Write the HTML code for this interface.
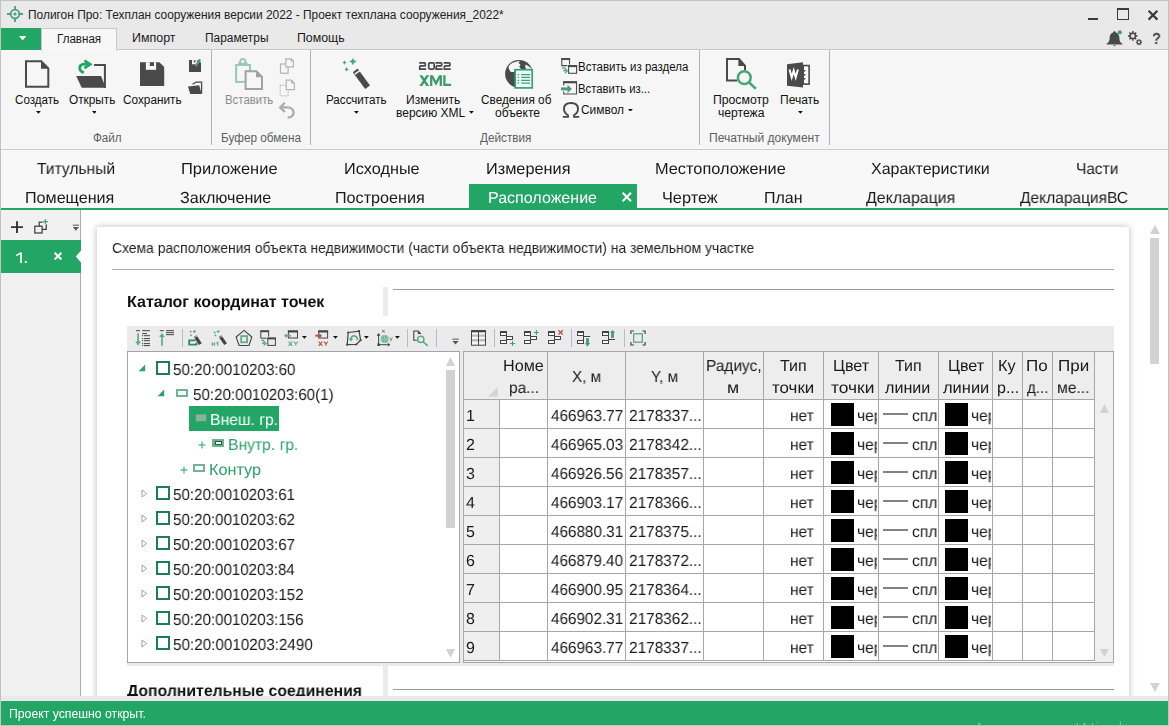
<!DOCTYPE html>
<html lang="ru">
<head>
<meta charset="utf-8">
<title>Полигон Про</title>
<style>
*{box-sizing:border-box;margin:0;padding:0}
html,body{width:1169px;height:726px;overflow:hidden;background:#e9e9e9}
body{font-family:"Liberation Sans",sans-serif;color:#1a1a1a;position:relative}
.abs{position:absolute}
.t{position:absolute;white-space:nowrap;line-height:1;transform-origin:0 0}
.g{will-change:transform;text-rendering:geometricPrecision}
.h{will-change:transform}
.c{position:absolute;white-space:nowrap;line-height:1;text-align:center}
#win{position:absolute;left:0;top:0;width:1169px;height:726px;border:1px solid #c2c2c2;border-bottom:none}
/* title */
#title{position:absolute;left:1px;top:1px;width:1167px;height:27px;background:#e9e9e9}
/* ribbon */
#rtabs{position:absolute;left:1px;top:28px;width:1167px;height:22px;background:#e9e9e9;border-bottom:1px solid #c9c9c9}
#rbody{position:absolute;left:1px;top:50px;width:1167px;height:100px;background:#f6f6f6;border-top:1px solid #fbfbfb;border-bottom:1px solid #cbcbcb}
.gsep{position:absolute;top:51px;width:1px;height:94px;background:#c6c6c6}
.glabel{position:absolute;top:131px;font-size:12px;color:#555;white-space:nowrap;line-height:14px;text-align:center}
.blabel{position:absolute;font-size:12.5px;color:#111;white-space:nowrap;line-height:14px;text-align:center}
/* section tabs */
#stabs{position:absolute;left:1px;top:150px;width:1167px;height:58px;background:#f8f8f8}
#gline{position:absolute;left:1px;top:208px;width:1167px;height:2px;background:#22a565}
.st{position:absolute;font-size:15.5px;line-height:18px;white-space:nowrap;color:#1a1a1a;text-align:center}
/* left panel */
#left{position:absolute;left:1px;top:210px;width:79px;height:486px;background:#f1f1f1}
#leftb{position:absolute;left:80px;top:210px;width:1px;height:486px;background:#ababab}
#main{position:absolute;left:81px;top:210px;width:1087px;height:486px;background:#fff;overflow:hidden}
#card{position:absolute;left:16px;top:17px;width:1032px;height:480px;background:#fff;box-shadow:0 0 7px rgba(0,0,0,.28)}
#status{position:absolute;left:1px;top:701px;width:1167px;height:24px;background:#22a565}
#bborder{position:absolute;left:0;top:725px;width:1169px;height:1px;background:#c2c2c2}
</style>
</head>
<body>
<div id="win"></div>
<div id="title"></div>
<div id="rtabs"></div>
<div id="rbody"></div>
<div id="stabs"></div>
<div id="gline"></div>
<div id="left"></div>
<div id="leftb"></div>
<div id="main"><div id="card"></div></div>
<svg class="abs" style="left:5px;top:5px;" width="20" height="18" viewBox="0 0 20 18"><g stroke="#4f9e78" fill="none" stroke-width="1.8"><circle cx="10" cy="9" r="4.3"/><path d="M10,1V4.7M10,13.3V17M2,9H5.7M14.3,9H18"/></g><circle cx="10" cy="9" r="1.6" fill="#4f9e78"/></svg>
<span class="t" style="left:28.24px;top:8px;font-size:12.5px;line-height:14px;color:#222;font-weight:400;transform:scaleX(0.9531);">Полигон Про: Техплан сооружения версии 2022 - Проект техплана сооружения_2022*</span>
<div class="abs" style="left:1088px;top:18px;width:10px;height:2px;background:#3a3a3a;"></div>
<div class="abs" style="left:1117px;top:8px;width:12px;height:12px;border:1px solid #3a3a3a;border-top:2px solid #3a3a3a"></div>
<svg class="abs" style="left:1147px;top:9px;" width="12" height="12" viewBox="0 0 12 12"><path d="M1.6,1.8L10.4,10.6M10.4,1.8L1.6,10.6" stroke="#3a3a3a" stroke-width="2.2" fill="none"/></svg>
<svg class="abs" style="left:1105px;top:29px;" width="20" height="18" viewBox="0 0 20 18"><path d="M9.5,2.2c-0.9,0-1.4,0.6-1.4,1.3C5.6,4.3,4.6,6.6,4.6,9.2c0,2.6-0.9,4.2-2.9,5.4v0.9h15.6v-0.9c-2-1.2-2.9-2.8-2.9-5.4c0-2.6-1-4.9-3.5-5.7C10.9,2.8,10.4,2.2,9.5,2.2z" fill="#4a4a4a"/><path d="M8,16.2h3l-1.5,1.2z" fill="#4a4a4a"/><circle cx="14.8" cy="3.3" r="2.1" fill="#3c9f6f"/></svg>
<svg class="abs" style="left:1126px;top:29px;" width="18" height="18" viewBox="0 0 18 18"><circle cx="6.8" cy="6.9" r="2.64" fill="none" stroke="#4a4a4a" stroke-width="1.6"/><path d="M9.68,6.90L11.60,6.90" stroke="#4a4a4a" stroke-width="1.52"/><path d="M8.84,8.94L10.19,10.29" stroke="#4a4a4a" stroke-width="1.52"/><path d="M6.80,9.78L6.80,11.70" stroke="#4a4a4a" stroke-width="1.52"/><path d="M4.76,8.94L3.41,10.29" stroke="#4a4a4a" stroke-width="1.52"/><path d="M3.92,6.90L2.00,6.90" stroke="#4a4a4a" stroke-width="1.52"/><path d="M4.76,4.86L3.41,3.51" stroke="#4a4a4a" stroke-width="1.52"/><path d="M6.80,4.02L6.80,2.10" stroke="#4a4a4a" stroke-width="1.52"/><path d="M8.84,4.86L10.19,3.51" stroke="#4a4a4a" stroke-width="1.52"/><circle cx="13" cy="13.2" r="1.705" fill="none" stroke="#4a4a4a" stroke-width="1.2"/><path d="M14.86,13.20L16.10,13.20" stroke="#4a4a4a" stroke-width="1.14"/><path d="M14.32,14.52L15.19,15.39" stroke="#4a4a4a" stroke-width="1.14"/><path d="M13.00,15.06L13.00,16.30" stroke="#4a4a4a" stroke-width="1.14"/><path d="M11.68,14.52L10.81,15.39" stroke="#4a4a4a" stroke-width="1.14"/><path d="M11.14,13.20L9.90,13.20" stroke="#4a4a4a" stroke-width="1.14"/><path d="M11.68,11.88L10.81,11.01" stroke="#4a4a4a" stroke-width="1.14"/><path d="M13.00,11.34L13.00,10.10" stroke="#4a4a4a" stroke-width="1.14"/><path d="M14.32,11.88L15.19,11.01" stroke="#4a4a4a" stroke-width="1.14"/></svg>
<span class="t g" style="left:1152.14px;top:31px;font-size:16px;line-height:17px;color:#444;font-weight:700;transform:scaleX(0.9209);">?</span>
<div class="abs" style="left:1px;top:28px;width:40px;height:22px;background:#22a565;"></div>
<svg class="abs" style="left:19px;top:36.4px;" width="7.4" height="4.6" viewBox="0 0 7.4 4.6"><path d="M0,0H7.4L3.7,4.6Z" fill="#fff"/></svg>
<div class="abs" style="left:41px;top:28px;width:76px;height:23px;background:#f7f7f7;border:1px solid #c9c9c9;border-bottom:none"></div>
<span class="t" style="left:56.75px;top:32px;font-size:12.5px;line-height:14px;color:#1a1a1a;font-weight:400;transform:scaleX(0.9278);">Главная</span>
<span class="t" style="left:131.68px;top:31px;font-size:12.5px;line-height:14px;color:#1a1a1a;font-weight:400;transform:scaleX(0.9962);">Импорт</span>
<span class="t" style="left:204.74px;top:31px;font-size:12.5px;line-height:14px;color:#1a1a1a;font-weight:400;transform:scaleX(0.9527);">Параметры</span>
<span class="t" style="left:297.30px;top:31px;font-size:12.5px;line-height:14px;color:#1a1a1a;font-weight:400;transform:scaleX(0.9861);">Помощь</span>
<div class="abs" style="left:211px;top:50px;width:1px;height:95px;background:#b2b2b9;"></div>
<div class="abs" style="left:310px;top:50px;width:1px;height:95px;background:#b2b2b9;"></div>
<div class="abs" style="left:699px;top:50px;width:1px;height:95px;background:#b2b2b9;"></div>
<div class="abs" style="left:829px;top:50px;width:1px;height:95px;background:#b2b2b9;"></div>
<svg class="abs" style="left:24px;top:59px;" width="27" height="30" viewBox="0 0 27 30"><path d="M2,2.3H17.2L24.3,9.4V27.8H2Z" fill="none" stroke="#4a4a4a" stroke-width="2"/><path d="M17,1.6V9.7H25Z" fill="#4a4a4a"/></svg>
<span class="t" style="left:15.32px;top:93px;font-size:12.5px;line-height:14px;color:#111;font-weight:400;transform:scaleX(0.9296);">Создать</span>
<svg class="abs" style="left:36.3px;top:111.3px;" width="4.8" height="2.8" viewBox="0 0 4.8 2.8"><path d="M0,0H4.8L2.4,2.8Z" fill="#111"/></svg>
<svg class="abs" style="left:74px;top:58px;" width="34" height="31" viewBox="0 0 34 31"><path d="M20.1,6.9H30.9V29.8" fill="none" stroke="#4a4a4a" stroke-width="2"/><path d="M2.2,18.1H27L31.8,29.8H7.7Z" fill="#4a4a4a"/><path d="M9.8,14.6C4.6,13 4,6.6 10.2,6.2H14.4" fill="none" stroke="#22a565" stroke-width="2.8"/><path d="M10.4,2.6L16.2,6.2L10.4,10.2" fill="none" stroke="#22a565" stroke-width="2.7"/></svg>
<span class="t" style="left:68.75px;top:93px;font-size:12.5px;line-height:14px;color:#111;font-weight:400;transform:scaleX(0.9440);">Открыть</span>
<svg class="abs" style="left:91.5px;top:111.3px;" width="4.8" height="2.8" viewBox="0 0 4.8 2.8"><path d="M0,0H4.8L2.4,2.8Z" fill="#111"/></svg>
<svg class="abs" style="left:139px;top:61px;" width="27" height="26" viewBox="0 0 27 26"><path d="M1,1.2H20.4L25.2,6V25H1Z" fill="#4a4a4a"/><rect x="6.9" y="1.2" width="10.2" height="7.6" fill="#f6f6f6"/><rect x="10.8" y="1.2" width="4.2" height="3.8" fill="#4a4a4a"/></svg>
<span class="t" style="left:122.61px;top:93px;font-size:12.5px;line-height:14px;color:#111;font-weight:400;transform:scaleX(0.9430);">Сохранить</span>
<svg class="abs" style="left:188px;top:58px;" width="15" height="15" viewBox="0 0 15 15"><path d="M1,2.1H10.4L13,4.7V13.9H1Z" fill="#4a4a4a"/><rect x="4" y="2.1" width="5.4" height="4.2" fill="#f6f6f6"/><rect x="5.8" y="2.5" width="1.8" height="1.8" fill="#4a4a4a"/><path d="M7.6,8.2L12.2,1.4" stroke="#4f9f7a" stroke-width="2.3"/></svg>
<svg class="abs" style="left:187px;top:81px;" width="16" height="14" viewBox="0 0 16 14"><path d="M5.5,3.2L9,1.2H14.6V12.6" fill="none" stroke="#4a4a4a" stroke-width="1.3"/><path d="M1,5.4L12.2,4.2L14.6,13H3.2Z" fill="#4a4a4a"/></svg>
<span class="t" style="left:92.94px;top:131px;font-size:12.5px;line-height:14px;color:#5e5e5e;font-weight:400;transform:scaleX(0.9327);">Файл</span>
<svg class="abs" style="left:233px;top:56px;" width="32" height="35" viewBox="0 0 32 35"><rect x="3.1" y="9" width="13.9" height="16.9" fill="none" stroke="#9acab2" stroke-width="2"/><path d="M4.4,8.4L6.2,5.6H13.4L15.2,8.4Z" fill="#9acab2"/><circle cx="9.8" cy="5.4" r="2.5" fill="#f6f6f6" stroke="#9acab2" stroke-width="1.9"/><path d="M12.6,15.2H23.4L29,20.8V33H12.6Z" fill="#f6f6f6" stroke="#a2a2a2" stroke-width="2"/><path d="M23,14.4V21.2H29.8Z" fill="#a2a2a2"/></svg>
<span class="t" style="left:224.57px;top:93px;font-size:12.5px;line-height:14px;color:#8c8c8c;font-weight:400;transform:scaleX(0.9116);">Вставить</span>
<svg class="abs" style="left:279px;top:57px;" width="16" height="18" viewBox="0 0 16 18"><rect x="1.5" y="7" width="7.6" height="9.2" fill="#f6f6f6" stroke="#b4b4b4" stroke-width="1.2"/><path d="M6.8,1.9H12.2L14.4,4.1V9.9H6.8Z" fill="#f6f6f6" stroke="#b4b4b4" stroke-width="1.2"/><path d="M11.8,1.6V4.6H14.8Z" fill="#b4b4b4"/></svg>
<svg class="abs" style="left:279px;top:79px;" width="17" height="18" viewBox="0 0 17 18"><rect x="1.2" y="6.4" width="8" height="10.4" fill="none" stroke="#b4b4b4" stroke-width="1.2" stroke-dasharray="1.2 1.2"/><path d="M7.2,1.2H12.4L15.4,4.2V10.6H7.2Z" fill="#f6f6f6" stroke="#b4b4b4" stroke-width="1.2"/><path d="M12.2,1V4.6H15.6Z" fill="#b4b4b4"/></svg>
<svg class="abs" style="left:278px;top:101px;" width="18" height="18" viewBox="0 0 18 18"><path d="M2.2,6.4H9.4C17.6,6.4 17.6,16.6 9.6,16.6" fill="none" stroke="#ababab" stroke-width="2.3"/><path d="M6.8,1.8L2.2,6.4L6.8,11" fill="none" stroke="#ababab" stroke-width="2.3"/></svg>
<span class="t" style="left:221.24px;top:131px;font-size:12.5px;line-height:14px;color:#5e5e5e;font-weight:400;transform:scaleX(0.9413);">Буфер обмена</span>
<svg class="abs" style="left:341px;top:57px;" width="31" height="34" viewBox="0 0 31 34"><path d="M14.2,13.4L26.6,30.2" stroke="#4a4a4a" stroke-width="6"/><path d="M17.6,10.9L12.2,14.8" stroke="#f6f6f6" stroke-width="1.5" transform="translate(1.6,2.4)"/><path d="M11.9,0.9Q12.566,3.934 15.6,4.6Q12.566,5.266 11.9,8.3Q11.234,5.266 8.2,4.6Q11.234,3.934 11.9,0.9Z" fill="#4fa57d"/><path d="M3.5,3.3Q3.914,5.186 5.8,5.6Q3.914,6.014 3.5,7.9Q3.086,6.014 1.2,5.6Q3.086,5.186 3.5,3.3Z" fill="#4fa57d"/><path d="M5.6,10.1Q6.014,11.986 7.9,12.4Q6.014,12.814 5.6,14.7Q5.186,12.814 3.3,12.4Q5.186,11.986 5.6,10.1Z" fill="#4fa57d"/></svg>
<span class="t" style="left:325.55px;top:93px;font-size:12.5px;line-height:14px;color:#111;font-weight:400;transform:scaleX(0.9295);">Рассчитать</span>
<svg class="abs" style="left:354.1px;top:111.3px;" width="4.8" height="2.8" viewBox="0 0 4.8 2.8"><path d="M0,0H4.8L2.4,2.8Z" fill="#111"/></svg>
<svg class="abs" style="left:418px;top:61px;" width="34" height="26" viewBox="0 0 34 26"><path d="M1.15,1.85H6.35Q7.35,1.85 7.35,2.85V3.95Q7.35,4.95 6.35,4.95H2.75Q1.75,4.95 1.75,5.95V8.05H8.2 M11.95,1.85H14.95Q16.15,1.85 16.15,3.05V6.85Q16.15,8.05 14.95,8.05H11.95Q10.75,8.05 10.75,6.85V3.05Q10.75,1.85 11.95,1.85Z M17.55,1.85H22.75Q23.75,1.85 23.75,2.85V3.95Q23.75,4.95 22.75,4.95H19.15Q18.15,4.95 18.15,5.95V8.05H24.6 M25.75,1.85H30.95Q31.95,1.85 31.95,2.85V3.95Q31.95,4.95 30.95,4.95H27.35Q26.35,4.95 26.35,5.95V8.05H32.8" fill="none" stroke="#484848" stroke-width="1.7"/><clipPath id="cx"><rect x="0" y="14.25" width="34" height="10.75"/></clipPath><g clip-path="url(#cx)" stroke="#3c9a6c" fill="none"><path d="M2.4,13.6L10.2,25.6M10.2,13.6L2.4,25.6" stroke-width="2.5"/><path d="M13.2,25V14.3M22.8,25V14.3" stroke-width="2.3"/><path d="M13.4,14L18,22.4L22.6,14" stroke-width="2.3" stroke-linejoin="miter"/><path d="M26.4,14V25M25.3,23.85H33.1" stroke-width="2.3"/></g></svg>
<span class="t" style="left:406.11px;top:93px;font-size:12.5px;line-height:14px;color:#111;font-weight:400;transform:scaleX(0.9626);">Изменить</span>
<span class="t" style="left:395.77px;top:106px;font-size:12.5px;line-height:14px;color:#111;font-weight:400;transform:scaleX(0.9589);">версию XML</span>
<svg class="abs" style="left:469.2px;top:111.3px;" width="4.8" height="2.8" viewBox="0 0 4.8 2.8"><path d="M0,0H4.8L2.4,2.8Z" fill="#111"/></svg>
<svg class="abs" style="left:504px;top:58px;" width="31" height="32" viewBox="0 0 31 32"><circle cx="15" cy="15.85" r="13.9" fill="#4a4a4a"/><path d="M16,3.2C11,3 6,5.5 4.6,8.5C4.4,10.5 5.4,12.5 7,14L10.4,14L10.4,11L17,11L15.2,8.5L16.6,7L14.6,5Z" fill="#f6f6f6"/><path d="M21.5,6.5C24,7.5 26.5,9.5 27.6,11L22,11L21.2,8.5Z" fill="#f6f6f6"/><rect x="11.2" y="11.7" width="17" height="18.2" fill="#f4f8f6" stroke="#2fa37c" stroke-width="1.7"/><path d="M13.6,16.6H15.2M17.2,16.6H26M13.6,19.4H15.2M17.2,19.4H26M13.6,22.3H15.2M17.2,22.3H26M13.6,25.2H15.2M17.2,25.2H26" stroke="#35a57c" stroke-width="1.2"/></svg>
<span class="t" style="left:481.41px;top:93px;font-size:12.5px;line-height:14px;color:#111;font-weight:400;transform:scaleX(0.9424);">Сведения об</span>
<span class="t" style="left:494.99px;top:106px;font-size:12.5px;line-height:14px;color:#111;font-weight:400;transform:scaleX(0.9665);">объекте</span>
<svg class="abs" style="left:560px;top:57px;" width="18" height="17" viewBox="0 0 18 17"><path d="M1.8,1.6V8.6H7.4M9.5,7.4V1.6" fill="none" stroke="#4a4a4a" stroke-width="1.1"/><path d="M1.2,2H10.1" stroke="#4a4a4a" stroke-width="2"/><rect x="8.6" y="8.6" width="8" height="7.7" fill="#f6f6f6" stroke="#4a4a4a" stroke-width="1.1"/><path d="M8,9.1H17.2" stroke="#4a4a4a" stroke-width="2"/><path d="M2,11.2C4.2,10 5.8,11.4 5.4,13.8H3.4" fill="none" stroke="#62ad88" stroke-width="1.4"/><path d="M4.8,11.6L7.4,13.9L4.8,16.2" fill="none" stroke="#62ad88" stroke-width="1.3"/></svg>
<svg class="abs" style="left:560px;top:80px;" width="18" height="16" viewBox="0 0 18 16"><path d="M3.7,5.4V1.8H16.5V14H3.7V11.4" fill="none" stroke="#4a4a4a" stroke-width="1.1"/><path d="M3.2,2.3H17" stroke="#4a4a4a" stroke-width="2"/><path d="M1,8.9H8.4" stroke="#4f9a78" stroke-width="3"/><path d="M7.5,4.8L12,8.9L7.5,13Z" fill="#4f9a78"/></svg>
<svg class="abs" style="left:562px;top:101px;" width="18" height="18" viewBox="0 0 18 18"><path d="M0.8,15.9H6V14.2C3.2,12.6 2,10.4 2,7.8C2,4.2 4.8,2 9,2C13.2,2 16,4.2 16,7.8C16,10.4 14.8,12.6 12,14.2V15.9H17.2" fill="none" stroke="#484848" stroke-width="1.9"/></svg>
<span class="t" style="left:578.46px;top:60px;font-size:12.5px;line-height:14px;color:#111;font-weight:400;transform:scaleX(0.9207);">Вставить из раздела</span>
<span class="t" style="left:578.47px;top:82px;font-size:12.5px;line-height:14px;color:#111;font-weight:400;transform:scaleX(0.9067);">Вставить из...</span>
<span class="t" style="left:581.00px;top:103px;font-size:12.5px;line-height:14px;color:#111;font-weight:400;transform:scaleX(0.9544);">Символ</span>
<svg class="abs" style="left:628.3px;top:108.5px;" width="4.8" height="2.8" viewBox="0 0 4.8 2.8"><path d="M0,0H4.8L2.4,2.8Z" fill="#111"/></svg>
<span class="t" style="left:480.42px;top:131px;font-size:12.5px;line-height:14px;color:#5e5e5e;font-weight:400;transform:scaleX(0.9382);">Действия</span>
<svg class="abs" style="left:724px;top:56px;" width="34" height="35" viewBox="0 0 34 35"><path d="M21,14V9.8L15,3H3V24.6H13" fill="none" stroke="#4a4a4a" stroke-width="2"/><path d="M14.4,2V10H22Z" fill="#4a4a4a"/><circle cx="20.3" cy="21.7" r="6.4" fill="#f6f6f6" stroke="#4aa57c" stroke-width="2.5"/><path d="M24.9,26.3L31.8,32.7" stroke="#4aa57c" stroke-width="2.6"/></svg>
<span class="t" style="left:712.81px;top:93px;font-size:12.5px;line-height:14px;color:#111;font-weight:400;transform:scaleX(0.9773);">Просмотр</span>
<span class="t" style="left:718.18px;top:106px;font-size:12.5px;line-height:14px;color:#111;font-weight:400;transform:scaleX(0.9719);">чертежа</span>
<svg class="abs" style="left:785px;top:60px;" width="27" height="29" viewBox="0 0 27 29"><rect x="18.2" y="5.55" width="5.9" height="18.55" fill="#fff" stroke="#4a4a4a" stroke-width="1.6"/><path d="M18,10.7H20.4M18,14.7H20.4M18,18.7H20.4" stroke="#4a4a4a" stroke-width="1.5"/><path d="M2,4.2L18,2.2V27.6L2,25.7Z" fill="#4a4a4a"/><path d="M4.5,9.4L6.7,17.4L8.7,10.6L10.7,17.4L12.9,9.4" fill="none" stroke="#fff" stroke-width="2" stroke-linejoin="miter"/></svg>
<span class="t" style="left:779.53px;top:93px;font-size:12.5px;line-height:14px;color:#111;font-weight:400;transform:scaleX(0.9613);">Печать</span>
<svg class="abs" style="left:798.2px;top:111.3px;" width="4.8" height="2.8" viewBox="0 0 4.8 2.8"><path d="M0,0H4.8L2.4,2.8Z" fill="#111"/></svg>
<span class="t" style="left:709.32px;top:131px;font-size:12.5px;line-height:14px;color:#5e5e5e;font-weight:400;transform:scaleX(0.9640);">Печатный документ</span>
<span class="t g" style="left:37.16px;top:161px;font-size:16px;line-height:17px;color:#1a1a1a;font-weight:400;transform:scaleX(0.9739);">Титульный</span>
<span class="t g" style="left:181.17px;top:161px;font-size:16px;line-height:17px;color:#1a1a1a;font-weight:400;transform:scaleX(1.0290);">Приложение</span>
<span class="t g" style="left:343.87px;top:161px;font-size:16px;line-height:17px;color:#1a1a1a;font-weight:400;transform:scaleX(1.0163);">Исходные</span>
<span class="t g" style="left:485.66px;top:161px;font-size:16px;line-height:17px;color:#1a1a1a;font-weight:400;transform:scaleX(1.0179);">Измерения</span>
<span class="t g" style="left:655.16px;top:161px;font-size:16px;line-height:17px;color:#1a1a1a;font-weight:400;transform:scaleX(1.0201);">Местоположение</span>
<span class="t g" style="left:871.15px;top:161px;font-size:16px;line-height:17px;color:#1a1a1a;font-weight:400;transform:scaleX(0.9984);">Характеристики</span>
<span class="t g" style="left:1076.00px;top:161px;font-size:16px;line-height:17px;color:#1a1a1a;font-weight:400;transform:scaleX(0.9641);">Части</span>
<span class="t g" style="left:25.49px;top:190px;font-size:16px;line-height:17px;color:#1a1a1a;font-weight:400;transform:scaleX(1.0078);">Помещения</span>
<span class="t g" style="left:179.98px;top:190px;font-size:16px;line-height:17px;color:#1a1a1a;font-weight:400;transform:scaleX(1.0066);">Заключение</span>
<span class="t g" style="left:335.19px;top:190px;font-size:16px;line-height:17px;color:#1a1a1a;font-weight:400;transform:scaleX(1.0097);">Построения</span>
<div class="abs" style="left:469px;top:184px;width:168px;height:26px;background:#22a565;"></div>
<span class="t g" style="left:488.18px;top:190px;font-size:16px;line-height:17px;color:#fff;font-weight:400;transform:scaleX(1.0025);">Расположение</span>
<svg class="abs" style="left:621px;top:191px;" width="12" height="12" viewBox="0 0 12 12"><path d="M1.6,1.8L10,10.2M10,1.8L1.6,10.2" stroke="#fff" stroke-width="2.1" fill="none"/></svg>
<span class="t g" style="left:661.53px;top:190px;font-size:16px;line-height:17px;color:#1a1a1a;font-weight:400;transform:scaleX(1.0189);">Чертеж</span>
<span class="t g" style="left:763.71px;top:190px;font-size:16px;line-height:17px;color:#1a1a1a;font-weight:400;transform:scaleX(0.9956);">План</span>
<span class="t g" style="left:865.89px;top:190px;font-size:16px;line-height:17px;color:#1a1a1a;font-weight:400;transform:scaleX(0.9944);">Декларация</span>
<span class="t g" style="left:1019.69px;top:190px;font-size:16px;line-height:17px;color:#1a1a1a;font-weight:400;transform:scaleX(0.9702);">ДекларацияВС</span>
<svg class="abs" style="left:10px;top:220px;" width="14" height="14" viewBox="0 0 14 14"><path d="M7,1.2V13M1,7.1H13" stroke="#333" stroke-width="1.9"/></svg>
<svg class="abs" style="left:33px;top:218px;" width="16" height="17" viewBox="0 0 16 17"><rect x="6.2" y="4.2" width="7" height="7.2" fill="#f1f1f1" stroke="#3a3a3a" stroke-width="1.2"/><rect x="1.8" y="8.2" width="7.3" height="6.8" fill="#f1f1f1" stroke="#3a3a3a" stroke-width="1.2"/><circle cx="12.3" cy="3.6" r="2.9" fill="#f1f1f1"/><path d="M12.3,1.1V6.1M9.8,3.6H14.8" stroke="#3c9f6f" stroke-width="1.1"/></svg>
<svg class="abs" style="left:72px;top:223.5px;" width="8" height="8" viewBox="0 0 8 8"><path d="M0.8,1.2H7" stroke="#777" stroke-width="1.3"/><path d="M0.8,3H7L3.9,6.8Z" fill="#555"/></svg>
<div class="abs" style="left:1px;top:240px;width:80px;height:33px;background:#22a565;"></div>
<svg class="abs" style="left:75px;top:250px;" width="6" height="13" viewBox="0 0 6 13"><path d="M6,0.6L0.8,6.5L6,12.4Z" fill="#fff"/></svg>
<svg class="abs" style="left:14px;top:250px;" width="16" height="15" viewBox="0 0 16 15"><path d="M7,2.5V13" stroke="#fff" stroke-width="1.7"/><path d="M2.3,5.5L7,2.9" stroke="#fff" stroke-width="1.5"/><rect x="10.8" y="11" width="2" height="2" rx="0.6" fill="#fff"/></svg>
<svg class="abs" style="left:53px;top:251px;" width="10" height="10" viewBox="0 0 10 10"><path d="M1.6,1.7L8.4,8.5M8.4,1.7L1.6,8.5" stroke="#fff" stroke-width="2.1" fill="none"/></svg>
<div class="abs" style="left:0;top:0;width:1169px;height:696px;overflow:hidden">
<svg class="abs" style="left:1149.5px;top:225px;" width="10" height="9" viewBox="0 0 10 9"><path d="M5,0L10,9H0Z" fill="#d2d2d2"/></svg>
<div class="abs" style="left:1150.3px;top:237.7px;width:8.4px;height:126px;background:#d2d2d2;"></div>
<svg class="abs" style="left:1149.5px;top:683px;" width="10" height="9" viewBox="0 0 10 9"><path d="M0,0H10L5,9Z" fill="#d2d2d2"/></svg>
<span class="t h" style="left:111.80px;top:240px;font-size:14.5px;line-height:16px;color:#222;font-weight:400;transform:scaleX(0.9588);">Схема расположения объекта недвижимости (части объекта недвижимости) на земельном участке</span>
<div class="abs" style="left:112px;top:269px;width:1002px;height:1px;background:#a9a9ae;"></div>
<span class="t g" style="left:126.84px;top:294px;font-size:16px;line-height:17px;color:#111;font-weight:700;transform:scaleX(1.0009);">Каталог координат точек</span>
<div class="abs" style="left:383px;top:287px;width:5px;height:29px;background:#ebebeb;"></div>
<div class="abs" style="left:393px;top:289px;width:721px;height:1px;background:#9c9c9c;"></div>
<div class="abs" style="left:127px;top:326px;width:987px;height:340px;background:#ebebeb;"></div>
<svg class="abs" style="left:134px;top:329px;" width="18" height="18" viewBox="0 0 18 18"><path d="M4.1,4.2V15.6" stroke="#5dab85" stroke-width="1.7"/><path d="M1.2,12.6L4.1,16.4L7,12.6Z" fill="#5dab85"/><path d="M2,1.7H6M8.2,1.7H16M8.2,4.6H13M9.8,6.7H16M9.8,9.6H16M9.8,11.7H16M9.8,14.6H16M9.8,16.6H16" stroke="#444" stroke-width="1"/><path d="M8,6.7H9M8,9.6H9M8,11.7H9M8,14.6H9M8,16.6H9" stroke="#444" stroke-width="1"/></svg>
<svg class="abs" style="left:158px;top:329px;" width="18" height="18" viewBox="0 0 18 18"><path d="M4,5.4V16.8" stroke="#5dab85" stroke-width="1.7"/><path d="M1.1,8L4,4.1L6.9,8Z" fill="#5dab85"/><path d="M1.8,1.7H5.8M8,1.7H16M8,3.7H16M8,5.7H16" stroke="#444" stroke-width="1"/></svg>
<div class="abs" style="left:182px;top:329.3px;width:1px;height:17.6px;background:#b6bcc6;"></div>
<svg class="abs" style="left:187px;top:329px;" width="18" height="18" viewBox="0 0 18 18"><path d="M8.6,11.4H2.2V15.6H9.6V13.6" fill="none" stroke="#2f8f5f" stroke-width="1.9"/><path d="M8.2,7.2L13.4,15.2" stroke="#444" stroke-width="3.2"/><path d="M7.4,8.8L10.2,6.9" stroke="#ececec" stroke-width="0.7"/><path d="M5.9,2.5L8.9,2.5M7.4,1L7.4,4" stroke="#5dab85" stroke-width="1"/><path d="M2.7,2.6L4.5,2.6M3.6,1.7L3.6,3.5" stroke="#5dab85" stroke-width="1"/><path d="M3,6.3L4.8,6.3M3.9,5.4L3.9,7.2" stroke="#5dab85" stroke-width="1"/></svg>
<svg class="abs" style="left:211px;top:329px;" width="18" height="18" viewBox="0 0 18 18"><path d="M1.2,13.2V16.8M1.2,15H3.6M3.6,13.2V16.8M5.4,14.2L6.8,13.2V16.8" fill="none" stroke="#5dab85" stroke-width="1.1"/><path d="M9,7.2L14.6,15.2" stroke="#444" stroke-width="3.2"/><path d="M8.2,8.8L11,6.9" stroke="#ececec" stroke-width="0.7"/><path d="M5.7,2.5L8.7,2.5M7.2,1L7.2,4" stroke="#5dab85" stroke-width="1"/><path d="M2.7,3.4L4.5,3.4M3.6,2.5L3.6,4.3" stroke="#5dab85" stroke-width="1"/><path d="M3.5,6.4L5.3,6.4M4.4,5.5L4.4,7.3" stroke="#5dab85" stroke-width="1"/></svg>
<svg class="abs" style="left:235px;top:329px;" width="18" height="18" viewBox="0 0 18 18"><path d="M9.1,1.4L16.8,8L14,16.5H4.1L1.1,8Z" fill="none" stroke="#444" stroke-width="1.1"/><rect x="6.2" y="7.1" width="5.9" height="6.2" fill="none" stroke="#5dab85" stroke-width="1.7"/></svg>
<svg class="abs" style="left:259px;top:329px;" width="18" height="18" viewBox="0 0 18 18"><path d="M1.8,2V9.2H7.6M9.6,7.6V2" fill="none" stroke="#444" stroke-width="1"/><path d="M1.3,2.2H10.1" stroke="#444" stroke-width="2"/><rect x="8.8" y="9.4" width="7.6" height="7" fill="#ececec" stroke="#444" stroke-width="1"/><path d="M8.3,9.4H16.9" stroke="#444" stroke-width="2"/><path d="M2.4,11.6C4.4,10.6 5.6,12 5.2,14.4H3" fill="none" stroke="#5dab85" stroke-width="1.3"/><path d="M4.6,12.4L7,14.5L4.6,16.6" fill="none" stroke="#5dab85" stroke-width="1.2"/></svg>
<svg class="abs" style="left:283px;top:329px;" width="18" height="18" viewBox="0 0 18 18"><rect x="5.4" y="2.3" width="9.1" height="6.7" fill="none" stroke="#444" stroke-width="1"/><path d="M4.9,2.4H15" stroke="#444" stroke-width="2.2"/><path d="M2.4,6.7H7.9" stroke="#5dab85" stroke-width="2"/><path d="M3.6,4.5L1,6.7L3.6,8.9Z" fill="#5dab85"/><path d="M5.6,12.6L9.2,16.8M9.2,12.6L5.6,16.8M10.8,12.6L12.8,14.8L14.8,12.6M12.8,14.8V16.8" fill="none" stroke="#5dab85" stroke-width="1.1"/></svg>
<svg class="abs" style="left:302.3px;top:336.2px;" width="4.8" height="2.8" viewBox="0 0 4.8 2.8"><path d="M0,0H4.8L2.4,2.8Z" fill="#111"/></svg>
<svg class="abs" style="left:314px;top:329px;" width="18" height="18" viewBox="0 0 18 18"><rect x="4.8" y="2.3" width="8.8" height="6.7" fill="none" stroke="#444" stroke-width="1"/><path d="M4.3,2.4H14.1" stroke="#444" stroke-width="2.2"/><path d="M1.3,6.7H6.6" stroke="#b8503a" stroke-width="2"/><path d="M5.4,4.5L8.1,6.7L5.4,8.9Z" fill="#b8503a"/><path d="M4.7,12.6L8.3,16.8M8.3,12.6L4.7,16.8M9.9,12.6L11.9,14.8L13.9,12.6M11.9,14.8V16.8" fill="none" stroke="#b8503a" stroke-width="1.1"/></svg>
<svg class="abs" style="left:333.1px;top:336.2px;" width="4.8" height="2.8" viewBox="0 0 4.8 2.8"><path d="M0,0H4.8L2.4,2.8Z" fill="#111"/></svg>
<svg class="abs" style="left:345px;top:329px;" width="18" height="18" viewBox="0 0 18 18"><path d="M3.2,3.5 L14.1,2.2 L15.6,11.2 L11.3,15.5 L2.2,15.7 Z" fill="none" stroke="#444" stroke-width="1.2"/><circle cx="3.2" cy="3.5" r="1.1" fill="#444"/><circle cx="14.1" cy="2.2" r="1.1" fill="#444"/><circle cx="15.6" cy="11.2" r="1.1" fill="#444"/><circle cx="11.3" cy="15.5" r="1.1" fill="#444"/><circle cx="2.2" cy="15.7" r="1.1" fill="#444"/><path d="M12.4,11.2C12.4,5.6 5.6,5.6 5.8,10.4" fill="none" stroke="#5dab85" stroke-width="1.6"/><path d="M3.6,9.4L6,12.6L8.2,9.6Z" fill="#5dab85"/></svg>
<svg class="abs" style="left:364.1px;top:336.2px;" width="4.8" height="2.8" viewBox="0 0 4.8 2.8"><path d="M0,0H4.8L2.4,2.8Z" fill="#111"/></svg>
<svg class="abs" style="left:376px;top:329px;" width="18" height="18" viewBox="0 0 18 18"><path d="M2.6,5V15.7H13.6" fill="none" stroke="#444" stroke-width="1"/><path d="M1.2,7L2.6,4.4L4,7M11.6,14.3L14,15.7L11.6,17.1" fill="none" stroke="#444" stroke-width="0.9"/><rect x="1.4" y="14.5" width="2.5" height="2.5" fill="#444"/><circle cx="8.6" cy="9.9" r="4" fill="#6bb592"/><path d="M4.8,9.9H12.4M8.6,6V13.8M6.8,6.4C5.8,8.6 5.8,11.2 6.8,13.4M10.4,6.4C11.4,8.6 11.4,11.2 10.4,13.4" fill="none" stroke="#a9d6bf" stroke-width="0.6"/><path d="M6.2,1L8.6,3.6M8.6,1L6.2,3.6" stroke="#444" stroke-width="0.8"/><path d="M13.6,8.4L15,11.2M16.4,8.4L14.4,12.6" stroke="#777" stroke-width="0.8" fill="none"/></svg>
<svg class="abs" style="left:395.3px;top:336.2px;" width="4.8" height="2.8" viewBox="0 0 4.8 2.8"><path d="M0,0H4.8L2.4,2.8Z" fill="#111"/></svg>
<div class="abs" style="left:407px;top:329.3px;width:1px;height:17.6px;background:#b6bcc6;"></div>
<svg class="abs" style="left:412px;top:329px;" width="18" height="18" viewBox="0 0 18 18"><path d="M8.6,5V4.6L6.2,2H1.8V11.2H4.8" fill="none" stroke="#444" stroke-width="1.1"/><path d="M5.8,1.4V5H9.2Z" fill="#444"/><circle cx="8.8" cy="10.4" r="3.1" fill="#ececec" stroke="#5dab85" stroke-width="1.5"/><path d="M11.2,12.8L15.8,16.8" stroke="#5dab85" stroke-width="1.6"/></svg>
<div class="abs" style="left:436px;top:329.3px;width:1px;height:17.6px;background:#b6bcc6;"></div>
<svg class="abs" style="left:451.5px;top:337.6px;" width="7" height="7" viewBox="0 0 7 7"><path d="M0.4,1.2H6.6" stroke="#777" stroke-width="1.3"/><path d="M0.4,3H6.6L3.5,6.6Z" fill="#555"/></svg>
<svg class="abs" style="left:470px;top:329px;" width="18" height="18" viewBox="0 0 18 18"><rect x="1.5" y="1.8" width="14" height="14.4" fill="#f7f7f7" stroke="#444" stroke-width="1"/><path d="M1,2.2H16" stroke="#444" stroke-width="2.2"/><path d="M8.5,2V16.2" stroke="#444" stroke-width="1"/><path d="M2,6.6H15M2,11.2H15" stroke="#bbb" stroke-width="2.4"/><path d="M8.5,2V16.2" stroke="#444" stroke-width="1"/></svg>
<div class="abs" style="left:494px;top:329.3px;width:1px;height:17.6px;background:#b6bcc6;"></div>
<svg class="abs" style="left:499px;top:329px;" width="18" height="18" viewBox="0 0 18 18"><rect x="1.5" y="2.5" width="6" height="4" fill="#fbfbfb" stroke="#444" stroke-width="1"/><path d="M1,3.5H8" stroke="#444" stroke-width="1"/><rect x="7.5" y="7.5" width="6" height="3" fill="#fbfbfb" stroke="#444" stroke-width="1"/><rect x="1.5" y="11.5" width="6" height="3" fill="#fbfbfb" stroke="#444" stroke-width="1"/><path d="M10.9,14.5H16.1M13.5,11.9V17.1" stroke="#459c72" stroke-width="1.1"/></svg>
<svg class="abs" style="left:523px;top:329px;" width="18" height="18" viewBox="0 0 18 18"><rect x="1.5" y="2.5" width="6" height="4" fill="#fbfbfb" stroke="#444" stroke-width="1"/><path d="M1,3.5H8" stroke="#444" stroke-width="1"/><rect x="7.5" y="7.5" width="6" height="3" fill="#fbfbfb" stroke="#444" stroke-width="1"/><rect x="1.5" y="11.5" width="6" height="3" fill="#fbfbfb" stroke="#444" stroke-width="1"/><path d="M10.8,3.5H16M13.4,0.9V6.1" stroke="#459c72" stroke-width="1.1"/></svg>
<svg class="abs" style="left:547px;top:329px;" width="18" height="18" viewBox="0 0 18 18"><rect x="1.5" y="2.5" width="6" height="4" fill="#fbfbfb" stroke="#444" stroke-width="1"/><path d="M1,3.5H8" stroke="#444" stroke-width="1"/><rect x="7.5" y="7.5" width="6" height="3" fill="#fbfbfb" stroke="#444" stroke-width="1"/><rect x="1.5" y="11.5" width="6" height="3" fill="#fbfbfb" stroke="#444" stroke-width="1"/><path d="M11.4,1.2L15.8,5.6M15.8,1.2L11.4,5.6" stroke="#b8503a" stroke-width="1.3"/></svg>
<div class="abs" style="left:571px;top:329.3px;width:1px;height:17.6px;background:#b6bcc6;"></div>
<svg class="abs" style="left:576px;top:329px;" width="18" height="18" viewBox="0 0 18 18"><rect x="1.5" y="2.5" width="6" height="4" fill="#fbfbfb" stroke="#444" stroke-width="1"/><path d="M1,3.5H8" stroke="#444" stroke-width="1"/><rect x="1.5" y="11.5" width="6" height="3" fill="#fbfbfb" stroke="#444" stroke-width="1"/><path d="M7.5,6V12" stroke="#444" stroke-width="1"/><path d="M7,7.5H14.2" stroke="#444" stroke-width="1"/><path d="M11.5,9.2V14.4" stroke="#459c72" stroke-width="2.8"/><path d="M8.8,14L11.5,17.4L14.2,14Z" fill="#459c72"/></svg>
<svg class="abs" style="left:601px;top:329px;" width="18" height="18" viewBox="0 0 18 18"><rect x="1.5" y="2.5" width="6" height="4" fill="#fbfbfb" stroke="#444" stroke-width="1"/><path d="M1,3.5H8" stroke="#444" stroke-width="1"/><rect x="1.5" y="11.5" width="6" height="3" fill="#fbfbfb" stroke="#444" stroke-width="1"/><path d="M7.5,6V12" stroke="#444" stroke-width="1"/><path d="M7,10.5H14" stroke="#444" stroke-width="1"/><path d="M11.5,3.2V8.9" stroke="#459c72" stroke-width="2.8"/><path d="M8.8,3.8L11.5,1L14.2,3.8Z" fill="#459c72"/></svg>
<div class="abs" style="left:624px;top:329.3px;width:1px;height:17.6px;background:#b6bcc6;"></div>
<svg class="abs" style="left:629px;top:329px;" width="18" height="18" viewBox="0 0 18 18"><path d="M1.9,5V2H5M13.4,2H16.1V5M16.1,13V16H13.4M5,16H1.9V13" fill="none" stroke="#444" stroke-width="1.2"/><rect x="4.7" y="4.8" width="8.6" height="8.4" fill="none" stroke="#459c72" stroke-width="1.1"/></svg>
<div class="abs" style="left:127px;top:351px;width:333px;height:312px;background:#fff;border:1px solid #a4a4aa"></div>
<svg class="abs" style="left:446px;top:357px;" width="9" height="9" viewBox="0 0 9 9"><path d="M4.5,0L9,9H0Z" fill="#d2d2d2"/></svg>
<div class="abs" style="left:446.3px;top:370.3px;width:8.6px;height:157.7px;background:#d2d2d2;"></div>
<svg class="abs" style="left:446px;top:649px;" width="9" height="9" viewBox="0 0 9 9"><path d="M0,0H9L4.5,9Z" fill="#d2d2d2"/></svg>
<svg class="abs" style="left:138px;top:364px;" width="8" height="8" viewBox="0 0 8 8"><path d="M0.6,7.2H7.2V0.6Z" fill="#2ba268"/></svg>
<div class="abs" style="left:156px;top:361px;width:14px;height:14px;border:2px solid #1e7d52;background:#fff"></div>
<span class="t g" style="left:173.29px;top:362px;font-size:16px;line-height:17px;color:#1a1a1a;font-weight:400;transform:scaleX(0.9494);">50:20:0010203:60</span>
<svg class="abs" style="left:157px;top:389px;" width="8" height="8" viewBox="0 0 8 8"><path d="M0.6,7.2H7.2V0.6Z" fill="#2ba268"/></svg>
<div class="abs" style="left:176px;top:389px;width:12px;height:8px;border:2px solid #72b394;background:#fff"></div>
<span class="t g" style="left:192.59px;top:387px;font-size:16px;line-height:17px;color:#1a1a1a;font-weight:400;transform:scaleX(0.9466);">50:20:0010203:60(1)</span>
<div class="abs" style="left:189px;top:406px;width:90px;height:25px;background:#22a565;"></div>
<div class="abs" style="left:195px;top:414px;width:12px;height:8px;border:1px solid #4f9a78;border-top-color:#63a787;background:#80b89c"></div>
<span class="t g" style="left:210.41px;top:412px;font-size:16px;line-height:17px;color:#fff;font-weight:400;transform:scaleX(0.9813);">Внеш. гр.</span>
<svg class="abs" style="left:198.4px;top:441.3px;" width="8" height="8" viewBox="0 0 8 8"><path d="M0.4,4H7.6M4,0.4V7.6" stroke="#2ba268" stroke-width="1.05"/></svg>
<div class="abs" style="left:212px;top:439px;width:12px;height:8px;background:#6fb08f"></div><div class="abs" style="left:214.6px;top:441.2px;width:7px;height:3.8px;border:1px solid #1f5f40;background:#fff"></div>
<span class="t g" style="left:227.62px;top:437px;font-size:16px;line-height:17px;color:#2ba268;font-weight:400;transform:scaleX(0.9791);">Внутр. гр.</span>
<svg class="abs" style="left:179.5px;top:466.4px;" width="8" height="8" viewBox="0 0 8 8"><path d="M0.4,4H7.6M4,0.4V7.6" stroke="#2ba268" stroke-width="1.05"/></svg>
<div class="abs" style="left:193px;top:464px;width:12px;height:8px;border:2px solid #72b394;background:#fff"></div>
<span class="t g" style="left:208.77px;top:462px;font-size:16px;line-height:17px;color:#2ba268;font-weight:400;transform:scaleX(1.0140);">Контур</span>
<svg class="abs" style="left:141px;top:489px;" width="7" height="9" viewBox="0 0 7 9"><path d="M1,1L5.6,4.5L1,8Z" fill="#fff" stroke="#a0a0a0" stroke-width="1"/></svg>
<div class="abs" style="left:156px;top:486px;width:14px;height:14px;border:2px solid #1e7d52;background:#fff"></div>
<span class="t g" style="left:173.29px;top:487px;font-size:16px;line-height:17px;color:#1a1a1a;font-weight:400;transform:scaleX(0.9459);">50:20:0010203:61</span>
<svg class="abs" style="left:141px;top:514px;" width="7" height="9" viewBox="0 0 7 9"><path d="M1,1L5.6,4.5L1,8Z" fill="#fff" stroke="#a0a0a0" stroke-width="1"/></svg>
<div class="abs" style="left:156px;top:511px;width:14px;height:14px;border:2px solid #1e7d52;background:#fff"></div>
<span class="t g" style="left:173.29px;top:512px;font-size:16px;line-height:17px;color:#1a1a1a;font-weight:400;transform:scaleX(0.9462);">50:20:0010203:62</span>
<svg class="abs" style="left:141px;top:539px;" width="7" height="9" viewBox="0 0 7 9"><path d="M1,1L5.6,4.5L1,8Z" fill="#fff" stroke="#a0a0a0" stroke-width="1"/></svg>
<div class="abs" style="left:156px;top:536px;width:14px;height:14px;border:2px solid #1e7d52;background:#fff"></div>
<span class="t g" style="left:173.29px;top:537px;font-size:16px;line-height:17px;color:#1a1a1a;font-weight:400;transform:scaleX(0.9462);">50:20:0010203:67</span>
<svg class="abs" style="left:141px;top:564px;" width="7" height="9" viewBox="0 0 7 9"><path d="M1,1L5.6,4.5L1,8Z" fill="#fff" stroke="#a0a0a0" stroke-width="1"/></svg>
<div class="abs" style="left:156px;top:561px;width:14px;height:14px;border:2px solid #1e7d52;background:#fff"></div>
<span class="t g" style="left:173.30px;top:562px;font-size:16px;line-height:17px;color:#1a1a1a;font-weight:400;transform:scaleX(0.9437);">50:20:0010203:84</span>
<svg class="abs" style="left:141px;top:589px;" width="7" height="9" viewBox="0 0 7 9"><path d="M1,1L5.6,4.5L1,8Z" fill="#fff" stroke="#a0a0a0" stroke-width="1"/></svg>
<div class="abs" style="left:156px;top:586px;width:14px;height:14px;border:2px solid #1e7d52;background:#fff"></div>
<span class="t g" style="left:173.29px;top:587px;font-size:16px;line-height:17px;color:#1a1a1a;font-weight:400;transform:scaleX(0.9474);">50:20:0010203:152</span>
<svg class="abs" style="left:141px;top:614px;" width="7" height="9" viewBox="0 0 7 9"><path d="M1,1L5.6,4.5L1,8Z" fill="#fff" stroke="#a0a0a0" stroke-width="1"/></svg>
<div class="abs" style="left:156px;top:611px;width:14px;height:14px;border:2px solid #1e7d52;background:#fff"></div>
<span class="t g" style="left:173.29px;top:612px;font-size:16px;line-height:17px;color:#1a1a1a;font-weight:400;transform:scaleX(0.9466);">50:20:0010203:156</span>
<svg class="abs" style="left:141px;top:639px;" width="7" height="9" viewBox="0 0 7 9"><path d="M1,1L5.6,4.5L1,8Z" fill="#fff" stroke="#a0a0a0" stroke-width="1"/></svg>
<div class="abs" style="left:156px;top:636px;width:14px;height:14px;border:2px solid #1e7d52;background:#fff"></div>
<span class="t g" style="left:173.29px;top:637px;font-size:16px;line-height:17px;color:#1a1a1a;font-weight:400;transform:scaleX(0.9521);">50:20:0010203:2490</span>
<div class="abs" style="left:463px;top:351px;width:651px;height:312px;background:#fff;border:1px solid #a6a6ae"></div>
<div class="abs" style="left:464px;top:352px;width:630px;height:47px;background:#ededed;"></div>
<div class="abs" style="left:1095px;top:352px;width:18px;height:310px;background:#f0f0f0;"></div>
<div class="abs" style="left:464px;top:399px;width:35px;height:263px;background:#efefef;"></div>
<div class="abs" style="left:464px;top:399px;width:630px;height:1px;background:#a6a6ae;"></div>
<div class="abs" style="left:464px;top:428px;width:630px;height:1px;background:#a6a6ae;"></div>
<div class="abs" style="left:464px;top:457px;width:630px;height:1px;background:#a6a6ae;"></div>
<div class="abs" style="left:464px;top:486px;width:630px;height:1px;background:#a6a6ae;"></div>
<div class="abs" style="left:464px;top:515px;width:630px;height:1px;background:#a6a6ae;"></div>
<div class="abs" style="left:464px;top:544px;width:630px;height:1px;background:#a6a6ae;"></div>
<div class="abs" style="left:464px;top:573px;width:630px;height:1px;background:#a6a6ae;"></div>
<div class="abs" style="left:464px;top:602px;width:630px;height:1px;background:#a6a6ae;"></div>
<div class="abs" style="left:464px;top:631px;width:630px;height:1px;background:#a6a6ae;"></div>
<div class="abs" style="left:464px;top:660px;width:630px;height:1px;background:#a6a6ae;"></div>
<div class="abs" style="left:547px;top:352px;width:1px;height:309px;background:#a6a6ae;"></div>
<div class="abs" style="left:625px;top:352px;width:1px;height:309px;background:#a6a6ae;"></div>
<div class="abs" style="left:703px;top:352px;width:1px;height:309px;background:#a6a6ae;"></div>
<div class="abs" style="left:763px;top:352px;width:1px;height:309px;background:#a6a6ae;"></div>
<div class="abs" style="left:823px;top:352px;width:1px;height:309px;background:#a6a6ae;"></div>
<div class="abs" style="left:878px;top:352px;width:1px;height:309px;background:#a6a6ae;"></div>
<div class="abs" style="left:938px;top:352px;width:1px;height:309px;background:#a6a6ae;"></div>
<div class="abs" style="left:992px;top:352px;width:1px;height:309px;background:#a6a6ae;"></div>
<div class="abs" style="left:1022px;top:352px;width:1px;height:309px;background:#a6a6ae;"></div>
<div class="abs" style="left:1052px;top:352px;width:1px;height:309px;background:#a6a6ae;"></div>
<div class="abs" style="left:1094px;top:352px;width:1px;height:309px;background:#a6a6ae;"></div>
<div class="abs" style="left:499px;top:399px;width:1px;height:262px;background:#a6a6ae;"></div>
<svg class="abs" style="left:487.5px;top:387.3px;" width="10" height="10" viewBox="0 0 10 10"><path d="M9.8,0V9.8H0Z" fill="#d3d3d3"/></svg>
<svg class="abs" style="left:1100px;top:404px;" width="9" height="9" viewBox="0 0 9 9"><path d="M4.5,0L9,9H0Z" fill="#d2d2d2"/></svg>
<svg class="abs" style="left:1100px;top:648.5px;" width="9" height="8" viewBox="0 0 9 8"><path d="M0,0H9L4.5,8Z" fill="#d2d2d2"/></svg>
<span class="t g" style="left:503.08px;top:358px;font-size:16px;line-height:17px;color:#1a1a1a;font-weight:400;transform:scaleX(1.0095);">Номе</span>
<span class="t g" style="left:508.81px;top:380px;font-size:16px;line-height:17px;color:#1a1a1a;font-weight:400;transform:scaleX(0.9666);">ра...</span>
<span class="t g" style="left:572.17px;top:369px;font-size:16px;line-height:17px;color:#1a1a1a;font-weight:400;transform:scaleX(0.9512);">X, м</span>
<span class="t g" style="left:650.97px;top:369px;font-size:16px;line-height:17px;color:#1a1a1a;font-weight:400;transform:scaleX(0.9499);">Y, м</span>
<span class="t g" style="left:705.74px;top:358px;font-size:16px;line-height:17px;color:#1a1a1a;font-weight:400;transform:scaleX(0.9629);">Радиус,</span>
<span class="t g" style="left:727.08px;top:380px;font-size:16px;line-height:17px;color:#1a1a1a;font-weight:400;transform:scaleX(1.1023);">м</span>
<span class="t g" style="left:779.95px;top:358px;font-size:16px;line-height:17px;color:#1a1a1a;font-weight:400;transform:scaleX(0.9868);">Тип</span>
<span class="t g" style="left:772.31px;top:380px;font-size:16px;line-height:17px;color:#1a1a1a;font-weight:400;transform:scaleX(1.0572);">точки</span>
<span class="t g" style="left:833.38px;top:358px;font-size:16px;line-height:17px;color:#1a1a1a;font-weight:400;transform:scaleX(1.0096);">Цвет</span>
<span class="t g" style="left:830.50px;top:380px;font-size:16px;line-height:17px;color:#1a1a1a;font-weight:400;transform:scaleX(1.0857);">точки</span>
<span class="t g" style="left:895.45px;top:358px;font-size:16px;line-height:17px;color:#1a1a1a;font-weight:400;transform:scaleX(0.9829);">Тип</span>
<span class="t g" style="left:885.42px;top:380px;font-size:16px;line-height:17px;color:#1a1a1a;font-weight:400;transform:scaleX(1.0067);">линии</span>
<span class="t g" style="left:947.58px;top:358px;font-size:16px;line-height:17px;color:#1a1a1a;font-weight:400;transform:scaleX(1.0096);">Цвет</span>
<span class="t g" style="left:942.92px;top:380px;font-size:16px;line-height:17px;color:#1a1a1a;font-weight:400;transform:scaleX(1.0295);">линии</span>
<span class="t g" style="left:998.07px;top:358px;font-size:16px;line-height:17px;color:#1a1a1a;font-weight:400;transform:scaleX(1.0135);">Ку</span>
<span class="t g" style="left:997.37px;top:380px;font-size:16px;line-height:17px;color:#1a1a1a;font-weight:400;transform:scaleX(1.0020);">р...</span>
<span class="t g" style="left:1026.22px;top:358px;font-size:16px;line-height:17px;color:#1a1a1a;font-weight:400;transform:scaleX(1.0624);">По</span>
<span class="t g" style="left:1026.96px;top:380px;font-size:16px;line-height:17px;color:#1a1a1a;font-weight:400;transform:scaleX(0.9444);">д...</span>
<span class="t g" style="left:1057.92px;top:358px;font-size:16px;line-height:17px;color:#1a1a1a;font-weight:400;transform:scaleX(1.0615);">При</span>
<span class="t g" style="left:1057.42px;top:380px;font-size:16px;line-height:17px;color:#1a1a1a;font-weight:400;transform:scaleX(0.9781);">ме...</span>
<span class="t g" style="left:466.38px;top:408px;font-size:16px;line-height:17px;color:#1a1a1a;font-weight:400;transform:scaleX(1.0000);">1</span>
<span class="t g" style="left:550.86px;top:408px;font-size:16px;line-height:17px;color:#1a1a1a;font-weight:400;transform:scaleX(0.9546);">466963.77</span>
<span class="t g" style="left:628.73px;top:408px;font-size:16px;line-height:17px;color:#1a1a1a;font-weight:400;transform:scaleX(0.9608);">2178337...</span>
<span class="t g" style="left:789.93px;top:408px;font-size:16px;line-height:17px;color:#1a1a1a;font-weight:400;transform:scaleX(0.9675);">нет</span>
<div class="abs" style="left:831px;top:403px;width:23px;height:23px;background:#000;"></div>
<div class="abs" style="left:855px;top:403px;width:21.5px;height:24px;overflow:hidden"><span class="t g" style="left:2.48px;top:5px;font-size:16px;line-height:17px;color:#1a1a1a;font-weight:400;transform:scaleX(0.9744);">чер</span></div>
<div class="abs" style="left:882.5px;top:413px;width:25.3px;height:2px;background:#828282;"></div>
<span class="t g" style="left:911.75px;top:408px;font-size:16px;line-height:17px;color:#1a1a1a;font-weight:400;transform:scaleX(0.9736);">спл</span>
<div class="abs" style="left:945px;top:403px;width:23px;height:23px;background:#000;"></div>
<div class="abs" style="left:969px;top:403px;width:21.5px;height:24px;overflow:hidden"><span class="t g" style="left:1.58px;top:5px;font-size:16px;line-height:17px;color:#1a1a1a;font-weight:400;transform:scaleX(0.9744);">чер</span></div>
<span class="t g" style="left:465.80px;top:437px;font-size:16px;line-height:17px;color:#1a1a1a;font-weight:400;transform:scaleX(1.0000);">2</span>
<span class="t g" style="left:550.86px;top:437px;font-size:16px;line-height:17px;color:#1a1a1a;font-weight:400;transform:scaleX(0.9532);">466965.03</span>
<span class="t g" style="left:628.73px;top:437px;font-size:16px;line-height:17px;color:#1a1a1a;font-weight:400;transform:scaleX(0.9608);">2178342...</span>
<span class="t g" style="left:789.93px;top:437px;font-size:16px;line-height:17px;color:#1a1a1a;font-weight:400;transform:scaleX(0.9675);">нет</span>
<div class="abs" style="left:831px;top:432px;width:23px;height:23px;background:#000;"></div>
<div class="abs" style="left:855px;top:432px;width:21.5px;height:24px;overflow:hidden"><span class="t g" style="left:2.48px;top:5px;font-size:16px;line-height:17px;color:#1a1a1a;font-weight:400;transform:scaleX(0.9744);">чер</span></div>
<div class="abs" style="left:882.5px;top:442px;width:25.3px;height:2px;background:#828282;"></div>
<span class="t g" style="left:911.75px;top:437px;font-size:16px;line-height:17px;color:#1a1a1a;font-weight:400;transform:scaleX(0.9736);">спл</span>
<div class="abs" style="left:945px;top:432px;width:23px;height:23px;background:#000;"></div>
<div class="abs" style="left:969px;top:432px;width:21.5px;height:24px;overflow:hidden"><span class="t g" style="left:1.58px;top:5px;font-size:16px;line-height:17px;color:#1a1a1a;font-weight:400;transform:scaleX(0.9744);">чер</span></div>
<span class="t g" style="left:465.99px;top:466px;font-size:16px;line-height:17px;color:#1a1a1a;font-weight:400;transform:scaleX(1.0000);">3</span>
<span class="t g" style="left:550.86px;top:466px;font-size:16px;line-height:17px;color:#1a1a1a;font-weight:400;transform:scaleX(0.9532);">466926.56</span>
<span class="t g" style="left:628.73px;top:466px;font-size:16px;line-height:17px;color:#1a1a1a;font-weight:400;transform:scaleX(0.9608);">2178357...</span>
<span class="t g" style="left:789.93px;top:466px;font-size:16px;line-height:17px;color:#1a1a1a;font-weight:400;transform:scaleX(0.9675);">нет</span>
<div class="abs" style="left:831px;top:461px;width:23px;height:23px;background:#000;"></div>
<div class="abs" style="left:855px;top:461px;width:21.5px;height:24px;overflow:hidden"><span class="t g" style="left:2.48px;top:5px;font-size:16px;line-height:17px;color:#1a1a1a;font-weight:400;transform:scaleX(0.9744);">чер</span></div>
<div class="abs" style="left:882.5px;top:471px;width:25.3px;height:2px;background:#828282;"></div>
<span class="t g" style="left:911.75px;top:466px;font-size:16px;line-height:17px;color:#1a1a1a;font-weight:400;transform:scaleX(0.9736);">спл</span>
<div class="abs" style="left:945px;top:461px;width:23px;height:23px;background:#000;"></div>
<div class="abs" style="left:969px;top:461px;width:21.5px;height:24px;overflow:hidden"><span class="t g" style="left:1.58px;top:5px;font-size:16px;line-height:17px;color:#1a1a1a;font-weight:400;transform:scaleX(0.9744);">чер</span></div>
<span class="t g" style="left:466.25px;top:495px;font-size:16px;line-height:17px;color:#1a1a1a;font-weight:400;transform:scaleX(1.0000);">4</span>
<span class="t g" style="left:550.86px;top:495px;font-size:16px;line-height:17px;color:#1a1a1a;font-weight:400;transform:scaleX(0.9546);">466903.17</span>
<span class="t g" style="left:628.73px;top:495px;font-size:16px;line-height:17px;color:#1a1a1a;font-weight:400;transform:scaleX(0.9608);">2178366...</span>
<span class="t g" style="left:789.93px;top:495px;font-size:16px;line-height:17px;color:#1a1a1a;font-weight:400;transform:scaleX(0.9675);">нет</span>
<div class="abs" style="left:831px;top:490px;width:23px;height:23px;background:#000;"></div>
<div class="abs" style="left:855px;top:490px;width:21.5px;height:24px;overflow:hidden"><span class="t g" style="left:2.48px;top:5px;font-size:16px;line-height:17px;color:#1a1a1a;font-weight:400;transform:scaleX(0.9744);">чер</span></div>
<div class="abs" style="left:882.5px;top:500px;width:25.3px;height:2px;background:#828282;"></div>
<span class="t g" style="left:911.75px;top:495px;font-size:16px;line-height:17px;color:#1a1a1a;font-weight:400;transform:scaleX(0.9736);">спл</span>
<div class="abs" style="left:945px;top:490px;width:23px;height:23px;background:#000;"></div>
<div class="abs" style="left:969px;top:490px;width:21.5px;height:24px;overflow:hidden"><span class="t g" style="left:1.58px;top:5px;font-size:16px;line-height:17px;color:#1a1a1a;font-weight:400;transform:scaleX(0.9744);">чер</span></div>
<span class="t g" style="left:465.96px;top:524px;font-size:16px;line-height:17px;color:#1a1a1a;font-weight:400;transform:scaleX(1.0000);">5</span>
<span class="t g" style="left:550.86px;top:524px;font-size:16px;line-height:17px;color:#1a1a1a;font-weight:400;transform:scaleX(0.9542);">466880.31</span>
<span class="t g" style="left:628.73px;top:524px;font-size:16px;line-height:17px;color:#1a1a1a;font-weight:400;transform:scaleX(0.9608);">2178375...</span>
<span class="t g" style="left:789.93px;top:524px;font-size:16px;line-height:17px;color:#1a1a1a;font-weight:400;transform:scaleX(0.9675);">нет</span>
<div class="abs" style="left:831px;top:519px;width:23px;height:23px;background:#000;"></div>
<div class="abs" style="left:855px;top:519px;width:21.5px;height:24px;overflow:hidden"><span class="t g" style="left:2.48px;top:5px;font-size:16px;line-height:17px;color:#1a1a1a;font-weight:400;transform:scaleX(0.9744);">чер</span></div>
<div class="abs" style="left:882.5px;top:529px;width:25.3px;height:2px;background:#828282;"></div>
<span class="t g" style="left:911.75px;top:524px;font-size:16px;line-height:17px;color:#1a1a1a;font-weight:400;transform:scaleX(0.9736);">спл</span>
<div class="abs" style="left:945px;top:519px;width:23px;height:23px;background:#000;"></div>
<div class="abs" style="left:969px;top:519px;width:21.5px;height:24px;overflow:hidden"><span class="t g" style="left:1.58px;top:5px;font-size:16px;line-height:17px;color:#1a1a1a;font-weight:400;transform:scaleX(0.9744);">чер</span></div>
<span class="t g" style="left:465.80px;top:553px;font-size:16px;line-height:17px;color:#1a1a1a;font-weight:400;transform:scaleX(1.0000);">6</span>
<span class="t g" style="left:550.86px;top:553px;font-size:16px;line-height:17px;color:#1a1a1a;font-weight:400;transform:scaleX(0.9522);">466879.40</span>
<span class="t g" style="left:628.73px;top:553px;font-size:16px;line-height:17px;color:#1a1a1a;font-weight:400;transform:scaleX(0.9608);">2178372...</span>
<span class="t g" style="left:789.93px;top:553px;font-size:16px;line-height:17px;color:#1a1a1a;font-weight:400;transform:scaleX(0.9675);">нет</span>
<div class="abs" style="left:831px;top:548px;width:23px;height:23px;background:#000;"></div>
<div class="abs" style="left:855px;top:548px;width:21.5px;height:24px;overflow:hidden"><span class="t g" style="left:2.48px;top:5px;font-size:16px;line-height:17px;color:#1a1a1a;font-weight:400;transform:scaleX(0.9744);">чер</span></div>
<div class="abs" style="left:882.5px;top:558px;width:25.3px;height:2px;background:#828282;"></div>
<span class="t g" style="left:911.75px;top:553px;font-size:16px;line-height:17px;color:#1a1a1a;font-weight:400;transform:scaleX(0.9736);">спл</span>
<div class="abs" style="left:945px;top:548px;width:23px;height:23px;background:#000;"></div>
<div class="abs" style="left:969px;top:548px;width:21.5px;height:24px;overflow:hidden"><span class="t g" style="left:1.58px;top:5px;font-size:16px;line-height:17px;color:#1a1a1a;font-weight:400;transform:scaleX(0.9744);">чер</span></div>
<span class="t g" style="left:465.78px;top:582px;font-size:16px;line-height:17px;color:#1a1a1a;font-weight:400;transform:scaleX(1.0000);">7</span>
<span class="t g" style="left:550.86px;top:582px;font-size:16px;line-height:17px;color:#1a1a1a;font-weight:400;transform:scaleX(0.9528);">466900.95</span>
<span class="t g" style="left:628.73px;top:582px;font-size:16px;line-height:17px;color:#1a1a1a;font-weight:400;transform:scaleX(0.9608);">2178364...</span>
<span class="t g" style="left:789.93px;top:582px;font-size:16px;line-height:17px;color:#1a1a1a;font-weight:400;transform:scaleX(0.9675);">нет</span>
<div class="abs" style="left:831px;top:577px;width:23px;height:23px;background:#000;"></div>
<div class="abs" style="left:855px;top:577px;width:21.5px;height:24px;overflow:hidden"><span class="t g" style="left:2.48px;top:5px;font-size:16px;line-height:17px;color:#1a1a1a;font-weight:400;transform:scaleX(0.9744);">чер</span></div>
<div class="abs" style="left:882.5px;top:587px;width:25.3px;height:2px;background:#828282;"></div>
<span class="t g" style="left:911.75px;top:582px;font-size:16px;line-height:17px;color:#1a1a1a;font-weight:400;transform:scaleX(0.9736);">спл</span>
<div class="abs" style="left:945px;top:577px;width:23px;height:23px;background:#000;"></div>
<div class="abs" style="left:969px;top:577px;width:21.5px;height:24px;overflow:hidden"><span class="t g" style="left:1.58px;top:5px;font-size:16px;line-height:17px;color:#1a1a1a;font-weight:400;transform:scaleX(0.9744);">чер</span></div>
<span class="t g" style="left:465.91px;top:611px;font-size:16px;line-height:17px;color:#1a1a1a;font-weight:400;transform:scaleX(1.0000);">8</span>
<span class="t g" style="left:550.86px;top:611px;font-size:16px;line-height:17px;color:#1a1a1a;font-weight:400;transform:scaleX(0.9542);">466902.31</span>
<span class="t g" style="left:628.73px;top:611px;font-size:16px;line-height:17px;color:#1a1a1a;font-weight:400;transform:scaleX(0.9608);">2178362...</span>
<span class="t g" style="left:789.93px;top:611px;font-size:16px;line-height:17px;color:#1a1a1a;font-weight:400;transform:scaleX(0.9675);">нет</span>
<div class="abs" style="left:831px;top:606px;width:23px;height:23px;background:#000;"></div>
<div class="abs" style="left:855px;top:606px;width:21.5px;height:24px;overflow:hidden"><span class="t g" style="left:2.48px;top:5px;font-size:16px;line-height:17px;color:#1a1a1a;font-weight:400;transform:scaleX(0.9744);">чер</span></div>
<div class="abs" style="left:882.5px;top:616px;width:25.3px;height:2px;background:#828282;"></div>
<span class="t g" style="left:911.75px;top:611px;font-size:16px;line-height:17px;color:#1a1a1a;font-weight:400;transform:scaleX(0.9736);">спл</span>
<div class="abs" style="left:945px;top:606px;width:23px;height:23px;background:#000;"></div>
<div class="abs" style="left:969px;top:606px;width:21.5px;height:24px;overflow:hidden"><span class="t g" style="left:1.58px;top:5px;font-size:16px;line-height:17px;color:#1a1a1a;font-weight:400;transform:scaleX(0.9744);">чер</span></div>
<span class="t g" style="left:465.86px;top:640px;font-size:16px;line-height:17px;color:#1a1a1a;font-weight:400;transform:scaleX(1.0000);">9</span>
<span class="t g" style="left:550.86px;top:640px;font-size:16px;line-height:17px;color:#1a1a1a;font-weight:400;transform:scaleX(0.9546);">466963.77</span>
<span class="t g" style="left:628.73px;top:640px;font-size:16px;line-height:17px;color:#1a1a1a;font-weight:400;transform:scaleX(0.9608);">2178337...</span>
<span class="t g" style="left:789.93px;top:640px;font-size:16px;line-height:17px;color:#1a1a1a;font-weight:400;transform:scaleX(0.9675);">нет</span>
<div class="abs" style="left:831px;top:635px;width:23px;height:23px;background:#000;"></div>
<div class="abs" style="left:855px;top:635px;width:21.5px;height:24px;overflow:hidden"><span class="t g" style="left:2.48px;top:5px;font-size:16px;line-height:17px;color:#1a1a1a;font-weight:400;transform:scaleX(0.9744);">чер</span></div>
<div class="abs" style="left:882.5px;top:645px;width:25.3px;height:2px;background:#828282;"></div>
<span class="t g" style="left:911.75px;top:640px;font-size:16px;line-height:17px;color:#1a1a1a;font-weight:400;transform:scaleX(0.9736);">спл</span>
<div class="abs" style="left:945px;top:635px;width:23px;height:23px;background:#000;"></div>
<div class="abs" style="left:969px;top:635px;width:21.5px;height:24px;overflow:hidden"><span class="t g" style="left:1.58px;top:5px;font-size:16px;line-height:17px;color:#1a1a1a;font-weight:400;transform:scaleX(0.9744);">чер</span></div>
<span class="t g" style="left:127.47px;top:683px;font-size:16px;line-height:17px;color:#111;font-weight:700;transform:scaleX(0.9857);">Дополнительные соединения</span>
<div class="abs" style="left:383px;top:665.6px;width:5px;height:40px;background:#ebebeb;"></div>
<div class="abs" style="left:393px;top:689.4px;width:721px;height:1px;background:#9c9c9c;"></div>
</div>
<div class="abs" style="left:1px;top:696px;width:1167px;height:5px;background:#e9e9e9;"></div>
<div id="status"></div><div id="bborder"></div>
<span class="t" style="left:8.81px;top:707px;font-size:12.5px;line-height:14px;color:#fff;font-weight:400;transform:scaleX(0.9793);">Проект успешно открыт.</span>
<svg class="abs" style="left:976px;top:721px;" width="150" height="4" viewBox="0 0 150 4"><path d="M2,4L3.2,1.6L4.4,4" fill="none" stroke="rgba(255,255,255,.45)" stroke-width="0.9"/><path d="M100.6,1.8L101.6,4M107.4,4L108.4,1.8L109.4,4M116,4L117,1.8" fill="none" stroke="rgba(255,255,255,.45)" stroke-width="0.9"/><rect x="120.6" y="0.6" width="1" height="1" fill="rgba(255,255,255,.45)"/><rect x="143.8" y="0.4" width="1" height="3.6" fill="rgba(255,255,255,.45)"/></svg>
</body>
</html>
